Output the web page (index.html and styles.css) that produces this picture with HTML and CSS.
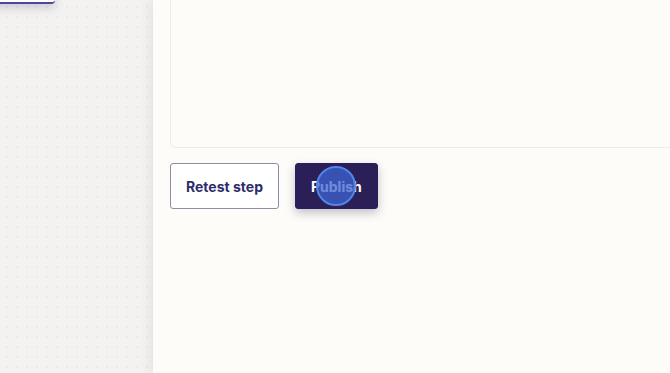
FILE: index.html
```html
<!DOCTYPE html>
<html>
<head>
<meta charset="utf-8">
<link rel="stylesheet" href="styles.css">
</head>
<body>
<div class="app">
  <div class="canvas">
    <div class="node"></div>
  </div>
  <div class="panel">
    <div class="box"></div>
    <div class="actions">
      <button class="btn btn-outline">Retest step</button>
      <button class="btn btn-primary">Publish<span class="cursor"></span></button>
    </div>
  </div>
</div>
</body>
</html>
```
FILE: styles.css
```css
html, body {
  margin: 0;
  padding: 0;
  width: 670px;
  height: 373px;
  overflow: hidden;
  font-family: Inter, "Liberation Sans", sans-serif;
}
.app {
  display: flex;
  height: 373px;
}
.canvas {
  width: 153px;
  flex: none;
  position: relative;
  background-color: #f3f2f0;
  background-image: radial-gradient(circle, #ebeae7 1px, transparent 1.2px);
  background-size: 10px 10px;
  background-position: 2px 2px;
}
.node {
  position: absolute;
  left: -10px;
  top: -40px;
  width: 65px;
  height: 42px;
  background: #fff;
  border-bottom: 2px solid #4a479c;
  border-radius: 4px;
  box-shadow: 0 4px 10px rgba(40, 30, 90, 0.18);
}
.panel {
  flex: 1;
  background: #fdfcf8;
  box-shadow: -4px 0 10px rgba(0, 0, 0, 0.06);
  position: relative;
  padding-left: 17px;
  display: flex;
  flex-direction: column;
  gap: 15px;
}
.box {
  flex: none;
  height: 156px;
  margin-top: -10px;
  border: 1px solid #edece6;
  border-right: none;
  border-radius: 0 0 0 6px;
  background: #fdfcf8;
}
.actions {
  display: flex;
  gap: 16px;
}
.btn {
  height: 46px;
  padding: 0 15px;
  font-family: Inter, "Liberation Sans", sans-serif;
  font-size: 14px;
  font-weight: 700;
  border-radius: 3px;
  cursor: pointer;
}
.btn-outline {
  background: #fff;
  border: 1px solid #8f8da3;
  color: #2e2d6b;
}
.btn-primary {
  position: relative;
  background: #2b1f57;
  border: 1px solid #2b1f57;
  color: #fff;
  box-shadow: 0 4px 10px rgba(30, 20, 60, 0.25);
}
.cursor {
  position: absolute;
  left: 20px;
  top: 2px;
  width: 36px;
  height: 36px;
  border-radius: 50%;
  background: rgba(62, 100, 210, 0.75);
  border: 2px solid #4f86ea;
}
```
